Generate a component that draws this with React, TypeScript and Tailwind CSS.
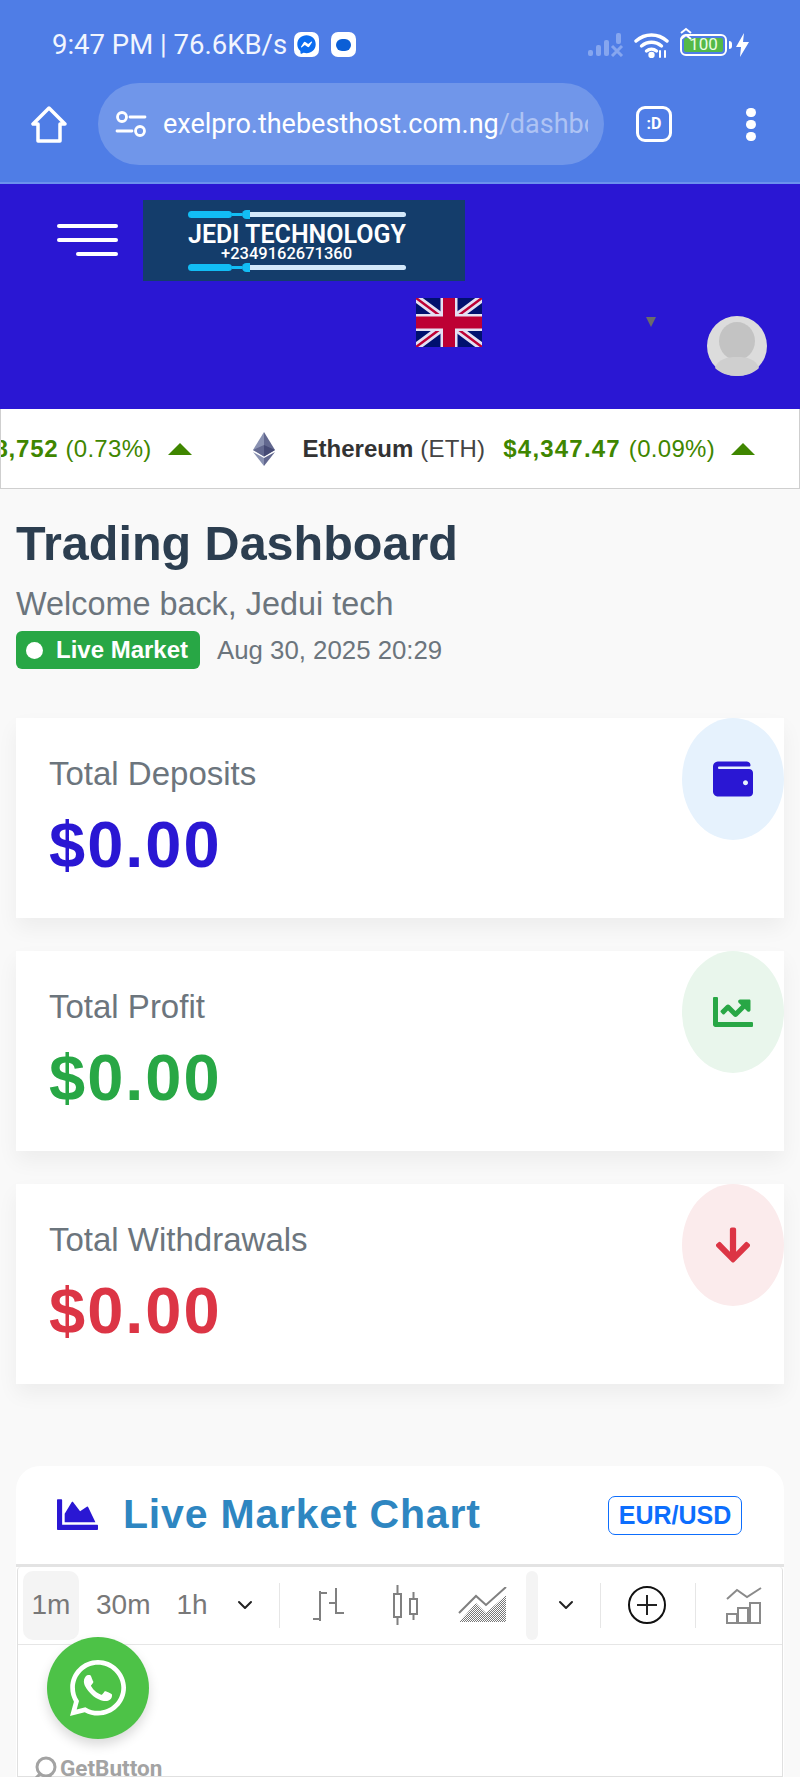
import React from 'react';
import { FaWallet, FaChartLine, FaArrowDown, FaChartArea, FaWhatsapp, FaFacebookMessenger } from 'react-icons/fa';
import { ChevronDown } from 'lucide-react';

const SANS = { fontFamily: '"Liberation Sans", Arial, sans-serif' };

const stats = [
  { label: 'Total Deposits', tone: 'text-[#2a17d3]', circle: 'bg-[#e6f2fd]', icon: <FaWallet className="w-[40px] h-[40px] text-[#2a17d3]" /> },
  { label: 'Total Profit', tone: 'text-[#28a745]', circle: 'bg-[#e9f6ec]', icon: <FaChartLine className="w-[40px] h-[40px] text-[#28a745]" /> },
  { label: 'Total Withdrawals', tone: 'text-[#dc3545]', circle: 'bg-[#fbebec]', icon: <FaArrowDown className="w-[36px] h-[40px] text-[#dc3545]" /> },
];

const Saber = () => (
  <div className="flex items-center w-[218px] h-[8px]">
    <div className="w-[44px] h-[7px] rounded-full bg-[#12bdf5]" />
    <div className="w-[10px] h-[3px] bg-[#12bdf5]" />
    <div className="w-[8px] h-[9px] rounded-l-[5px] bg-[#12bdf5]" />
    <div className="flex-1 h-[5px] rounded-r-full bg-[#d3e8fa]" />
  </div>
);

const Signal = () => (
  <svg width="36" height="24" viewBox="0 0 36 24" fill="#86a6ef">
    <rect x="0" y="17" width="5" height="6" rx="2" />
    <rect x="8" y="12" width="5" height="11" rx="2" />
    <rect x="16" y="7" width="5" height="16" rx="2" />
    <rect x="28" y="0" width="5" height="11" rx="2" />
    <path d="M24 13l10 10M34 13L24 23" stroke="#86a6ef" strokeWidth="3" fill="none" />
  </svg>
);

const Wifi = () => (
  <svg width="36" height="26" viewBox="0 0 36 26" fill="none" stroke="#fff" strokeWidth="3.4" strokeLinecap="round">
    <path d="M2 9c9-8 22-8 31 0" />
    <path d="M7.5 14c6-5 14-5 20 0" />
    <path d="M12.500 19c3-2.500 7-2.500 10 0" />
    <circle cx="17.500" cy="23" r="1.500" fill="#fff" />
    <path d="M26 19v6M31 19v6" strokeWidth="2" />
  </svg>
);

const Flag = () => (
  <svg className="w-[66px] h-[49px]" viewBox="0 0 66 49" preserveAspectRatio="none">
    <rect width="66" height="49" fill="#00106e" />
    <path d="M0 0l66 49M66 0L0 49" stroke="#e4e0f2" strokeWidth="8" />
    <path d="M0 0l33 24.500M66 49L33 24.500M66 0L33 24.500M0 49l33-24.500" stroke="#bd0034" strokeWidth="2.500" />
    <path d="M33 0v49M0 24.500h66" stroke="#e4e0f2" strokeWidth="17" />
    <path d="M33 0v49M0 24.500h66" stroke="#bd0034" strokeWidth="12" />
  </svg>
);

const Avatar = () => (
  <svg className="w-[60px] h-[60px]" viewBox="0 0 60 60">
    <circle cx="30" cy="30" r="30" fill="#dcdcdc" />
    <ellipse cx="30" cy="25" rx="18" ry="19" fill="#c3c3c3" />
    <path d="M8 52c3-9 12-11 22-11s19 2 22 11c-5 5-13 8-22 8S13 57 8 52z" fill="#cfcfcf" />
  </svg>
);

const EthLogo = () => (
  <svg width="22" height="34" viewBox="0 0 22 34">
    <path d="M11 0L0 18l11 6.500z" fill="#8a92b2" />
    <path d="M11 0l11 18-11 6.500z" fill="#62688f" />
    <path d="M0 20l11 14v-8z" fill="#8a92b2" />
    <path d="M22 20L11 34v-8z" fill="#62688f" />
    <path d="M0 18l11-5v11.500z" fill="#62688f" />
    <path d="M22 18l-11-5v11.500z" fill="#454a75" />
  </svg>
);

const Up = () => <div className="w-0 h-0 border-x-[12px] border-x-transparent border-b-[12px] border-b-[#3f8600]" />;

const Divider = () => <div className="w-px h-[45px] bg-[#e6e6e6]" />;

const App: React.FC = () => {
  return (
    <div className="w-[800px] h-[1777px] overflow-hidden relative bg-[#f9f9f9] flex flex-col" style={SANS}>
      {/* Phone + browser chrome */}
      <div className="h-[184px] shrink-0 bg-[#4f7de6] border-b-2 border-[#6b92ee]">
        <div className="h-[83px] flex items-center pl-[52px] pr-[51px] pt-[6px]">
          <span className="text-[27.500px] text-[#f1f5fe] leading-none" style={{ fontFamily: 'Roboto, sans-serif' }}>9:47 PM | 76.6KB/s</span>
          <div className="ml-[7px] w-[25px] h-[25px] rounded-[7px] bg-white flex items-center justify-center">
            <FaFacebookMessenger className="w-[19px] h-[19px] text-[#0b6cf0]" />
          </div>
          <div className="ml-[12px] w-[25px] h-[25px] rounded-[7px] bg-white flex items-center justify-center">
            <div className="w-[15px] h-[12px] rounded-[6px] bg-[#0b5fd6]" />
          </div>
          <div className="ml-auto flex items-center">
            <Signal />
            <div className="ml-[10px]"><Wifi /></div>
            <div className="ml-[10px] relative w-[47px] h-[22px] rounded-[6px] border-2 border-white p-[2px]">
              <div className="h-full rounded-[2px] bg-[#54b948] flex items-center justify-center text-[17px] leading-none text-[#eafde4]" style={{ fontFamily: 'Roboto, sans-serif' }}>100</div>
              <svg className="absolute -left-[2px] -top-[9px]" width="13" height="14" viewBox="0 0 13 14" fill="none" stroke="#fff" strokeWidth="2">
                <path d="M1 6l5-4 5 4M1 12l5-4 5 4" />
              </svg>
            </div>
            <div className="w-[3px] h-[8px] ml-[2px] bg-white rounded-r" />
            <svg className="ml-[4px]" width="13" height="24" viewBox="0 0 13 24" fill="#fff"><path d="M8 0L0 14h5l-1 10 9-15H7z" /></svg>
          </div>
        </div>
        <div className="flex items-center h-[82px]">
          <svg className="ml-[31px]" width="36" height="37" viewBox="0 0 36 37" fill="none" stroke="#fff" strokeWidth="3.500" strokeLinejoin="round">
            <path d="M18 2L2 18h5v17h22V18h5z" />
          </svg>
          <div className="ml-[31px] w-[506px] h-[82px] rounded-full bg-[#7096ea] flex items-center pl-[17px] pr-[16px] overflow-hidden">
            <svg className="shrink-0" width="32" height="26" viewBox="0 0 32 26" fill="none" stroke="#fff" strokeWidth="2.800" strokeLinecap="round">
              <circle cx="7" cy="6" r="4.500" />
              <path d="M15 6h15M2 20h15" />
              <circle cx="25" cy="20" r="4.500" />
            </svg>
            <div className="ml-[16px] overflow-hidden whitespace-nowrap text-[27px] text-white" style={{ fontFamily: 'Roboto, sans-serif' }}>
              exelpro.thebesthost.com.ng<span className="text-[#aec3f4]">/dashboard</span>
            </div>
          </div>
          <div className="ml-[32px] w-[36px] h-[36px] rounded-[9px] border-[3px] border-white flex items-center justify-center text-[16px] font-bold text-white" style={{ fontFamily: 'Roboto, sans-serif' }}>:D</div>
          <div className="ml-[74px] flex flex-col gap-[2px]">
            <div className="w-[10px] h-[9px] rounded-full bg-white" />
            <div className="w-[10px] h-[9px] rounded-full bg-white my-[1px]" />
            <div className="w-[10px] h-[9px] rounded-full bg-white" />
          </div>
        </div>
      </div>

      {/* Site header */}
      <header className="h-[225px] shrink-0 bg-[#2a17d3] pt-[16px]">
        <div className="flex items-center">
          <div className="ml-[57px] w-[61px] flex flex-col items-end gap-[10px] -mt-[1px]">
            <div className="w-full h-[4px] rounded-full bg-white" />
            <div className="w-full h-[4px] rounded-full bg-white" />
            <div className="w-[42px] h-[4px] rounded-full bg-white" />
          </div>
          <div className="ml-[25px] w-[322px] h-[81px] bg-[#143d6b] pl-[45px] pt-[10px] flex flex-col text-white" style={{ fontFamily: 'Roboto, sans-serif' }}>
            <Saber />
            <div className="text-[25px] leading-[22px] mt-[6px] font-semibold whitespace-nowrap">JEDI TECHNOLOGY</div>
            <div className="text-[16.500px] leading-[16px] ml-[33px] font-medium">+2349162671360</div>
            <div className="mt-[1px]"><Saber /></div>
          </div>
        </div>
        <div className="flex items-start mt-[17px]">
          <div className="ml-[416px]"><Flag /></div>
          <div className="ml-[164px] mt-[19px] w-0 h-0 border-x-[5px] border-x-transparent border-t-[10px] border-t-[#6b6b6b]" />
          <div className="ml-[51px] mt-[18px]"><Avatar /></div>
        </div>
      </header>

      {/* Ticker */}
      <div className="h-[80px] shrink-0 bg-white border border-[#cfcfcf] border-t-0 flex items-center justify-end pr-[44px] overflow-hidden whitespace-nowrap text-[24px]">
        <div className="flex items-center shrink-0">
          <span className="font-bold text-[#3f8600] tracking-[0.8px]">$108,752</span>
          <span className="ml-[7px] text-[#3f8600] tracking-[0.3px]">(0.73%)</span>
          <div className="ml-[16px]"><Up /></div>
          <div className="ml-[61px]"><EthLogo /></div>
          <span className="ml-[28px] font-bold text-[#333]">Ethereum</span>
          <span className="ml-[7px] text-[#444] tracking-[0.2px]">(ETH)</span>
          <span className="ml-[18px] font-bold text-[#3f8600] tracking-[1.2px]">$4,347.47</span>
          <span className="ml-[8px] text-[#3f8600] tracking-[0.3px]">(0.09%)</span>
          <div className="ml-[16px]"><Up /></div>
        </div>
      </div>

      {/* Page title */}
      <div className="px-[16px] pt-[26px] shrink-0">
        <h1 className="text-[48.500px] leading-[56px] font-bold text-[#2c3e50]">Trading Dashboard</h1>
        <p className="mt-[13px] text-[32.400px] leading-[40px] text-[#6c757d]">Welcome back, Jedui tech</p>
        <div className="mt-[7px] flex items-center">
          <div className="w-[184px] h-[38px] rounded-[6px] bg-[#28a745] flex items-center pl-[10px] text-white">
            <div className="w-[17px] h-[17px] rounded-full bg-white" />
            <span className="ml-[13px] text-[24px] font-bold whitespace-nowrap">Live Market</span>
          </div>
          <span className="ml-[17px] text-[25.800px] text-[#6c757d]">Aug 30, 2025 20:29</span>
        </div>
      </div>

      {/* Stat cards */}
      <div className="mt-[48px] px-[16px] flex flex-col gap-[33px] shrink-0">
        {stats.map(s => (
          <div key={s.label} className="h-[200px] bg-white shadow-[0_10px_20px_rgba(0,0,0,0.05)] flex justify-between">
            <div className="pl-[33px] pt-[36px]">
              <div className="text-[33px] leading-[40px] text-[#6c757d]">{s.label}</div>
              <div className={`mt-[13px] text-[65px] leading-[76px] font-bold tracking-[2px] ${s.tone}`}>$0.00</div>
            </div>
            <div className={`w-[102px] h-[122px] rounded-[50%] flex items-center justify-center ${s.circle}`}>
              {s.icon}
            </div>
          </div>
        ))}
      </div>

      {/* Chart card */}
      <div className="mt-[82px] mx-[16px] flex-1 bg-white rounded-t-[24px] flex flex-col">
        <div className="h-[101px] shrink-0 flex items-center border-b-[3px] border-[#e3e3e3] pl-[41px] pr-[42px]">
          <FaChartArea className="w-[41px] h-[41px] text-[#2a17d3]" />
          <span className="ml-[25px] text-[41px] tracking-[0.8px] font-bold text-[#2e86c1] whitespace-nowrap">Live Market Chart</span>
          <div className="ml-auto mt-[2px] w-[134px] h-[39px] rounded-[7px] border border-[#0d6efd] flex items-center justify-center text-[25px] font-bold text-[#0d6efd]">EUR/USD</div>
        </div>
        <div className="flex-1 border border-[#e0e0e0] border-t-0 ml-[1px] mr-[1px] rounded-t-[4px]">
          <div className="h-[78px] border-b border-[#e6e6e6] flex items-center text-[28px] text-[#787878]">
            <div className="ml-[5px] w-[56px] h-[69px] rounded-[10px] bg-[#f4f4f4] flex items-center justify-center">1m</div>
            <span className="ml-[17px]">30m</span>
            <span className="ml-[26px]">1h</span>
            <ChevronDown className="ml-[25px] w-[24px] h-[24px] text-[#222]" strokeWidth={2} />
            <div className="ml-[22px]"><Divider /></div>
            <svg className="ml-[32px]" width="33" height="36" viewBox="0 0 33 36" fill="none" stroke="#808080" strokeWidth="2">
              <path d="M8 4v30M8 6h7M1 32h7M24 1v26M17 16h7M24 26h8" />
            </svg>
            <svg className="ml-[47px]" width="27" height="40" viewBox="0 0 27 40" fill="none" stroke="#808080" strokeWidth="2">
              <rect x="2" y="9" width="7" height="23" />
              <path d="M5.500 0v9M5.500 32v8" />
              <rect x="18" y="14" width="7" height="15" />
              <path d="M21.500 7v7M21.500 29v6" />
            </svg>
            <svg className="ml-[39px]" width="49" height="36" viewBox="0 0 49 36">
              <defs>
                <pattern id="dots" width="2" height="2" patternUnits="userSpaceOnUse">
                  <rect width="1" height="1" fill="#777" />
                  <rect x="1" y="1" width="1" height="1" fill="#777" />
                </pattern>
              </defs>
              <path d="M1 35l17-19 10 10L48 8v27z" fill="url(#dots)" />
              <path d="M1 26l17-17 10 9L48 0" fill="none" stroke="#808080" strokeWidth="2" />
            </svg>
            <div className="ml-[19px] w-[12px] h-[69px] rounded-[6px] bg-[#f4f4f4]" />
            <ChevronDown className="ml-[16px] w-[24px] h-[24px] text-[#222]" strokeWidth={2} />
            <div className="ml-[22px]"><Divider /></div>
            <div className="ml-[27px] w-[38px] h-[38px] rounded-full border-2 border-[#111] flex items-center justify-center">
              <svg width="20" height="20" viewBox="0 0 20 20" stroke="#222" strokeWidth="2"><path d="M10 0v20M0 10h20" /></svg>
            </div>
            <div className="ml-[29px]"><Divider /></div>
            <svg className="ml-[30px]" width="36" height="37" viewBox="0 0 36 37" fill="none" stroke="#8a8a8a" strokeWidth="2">
              <path d="M1 12l10-9 10 7L35 1" />
              <rect x="1" y="27" width="10" height="9" />
              <rect x="12" y="21" width="10" height="15" />
              <rect x="24" y="16" width="10" height="20" />
            </svg>
          </div>
        </div>
      </div>

      {/* Floating WhatsApp widget */}
      <div className="absolute left-[47px] top-[1637px] w-[102px] h-[102px] rounded-full bg-[#4dc247] shadow-[0_6px_12px_rgba(0,0,0,0.15)] flex items-center justify-center">
        <FaWhatsapp className="w-[64px] h-[64px] text-white" />
      </div>
      <div className="absolute left-[32px] top-[1752px] flex items-center text-[#a3a3a3]">
        <svg width="27" height="26" viewBox="0 0 27 26" fill="none" stroke="#a3a3a3" strokeWidth="3">
          <circle cx="14" cy="11" r="9" />
          <path d="M2 24l7-7M12 24l7-5" />
        </svg>
        <span className="ml-[1px] text-[22.500px] font-bold" style={{ fontFamily: 'Roboto, sans-serif' }}>GetButton</span>
      </div>
    </div>
  );
};

export default App;
